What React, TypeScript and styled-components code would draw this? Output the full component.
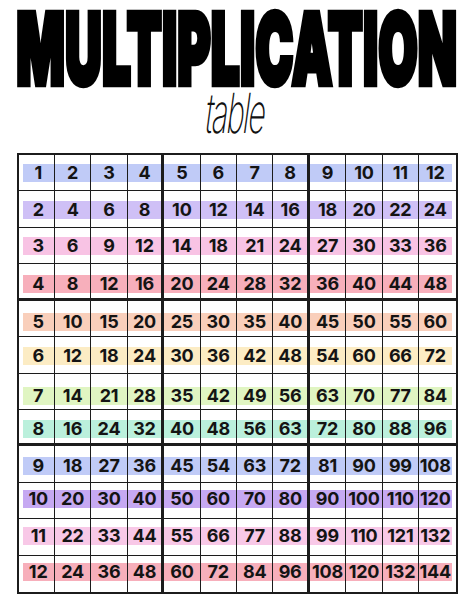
import React, { useLayoutEffect, useRef, useState } from 'react';
import styled, { createGlobalStyle } from 'styled-components';

const GlobalStyle = createGlobalStyle`
  html, body {
    margin: 0;
    padding: 0;
    background: #ffffff;
  }
  body {
    overflow: hidden;
  }
`;

const Page = styled.div`
  width: 474px;
  height: 612px;
  padding-top: 11px;
  box-sizing: border-box;
  display: flex;
  flex-direction: column;
  align-items: center;
  background: #ffffff;
  font-family: Inter, 'Noto Sans', sans-serif;
`;

const TitleBox = styled.div`
  width: 452px;
  height: 78px;
  display: flex;
  justify-content: center;
`;

const Title = styled.h1`
  margin: -2px 0 0 0;
  padding: 0 3px;
  white-space: nowrap;
  font-family: Inter, 'Noto Sans', sans-serif;
  font-weight: 900;
  font-size: 44px;
  line-height: 0.85em;
  letter-spacing: 0.6px;
  color: #000;
  -webkit-text-stroke: 3.4px #000;
  transform-origin: center top;
`;

const ScriptBox = styled.div`
  height: 64px;
  display: flex;
  align-items: flex-start;
  justify-content: center;
`;

const Script = styled.div`
  font-family: Inter, 'DejaVu Sans', sans-serif;
  font-weight: 200;
  font-size: 30px;
  line-height: 30px;
  letter-spacing: -1.5px;
  color: #111;
  transform: scaleY(1.85) skewX(-14deg);
  transform-origin: center top;
  margin: -4px 0 0 4px;
`;

const Grid = styled.div`
  width: 441px;
  height: 441px;
  box-sizing: border-box;
  border: 2px solid #1c1c1c;
  display: grid;
  grid-template-columns: repeat(12, 1fr);
  grid-template-rows: repeat(12, 1fr);
`;

const Cell = styled.div<{ $col: number; $row: number }>`
  box-sizing: border-box;
  min-width: 0;
  border-right: ${p => (p.$col === 12 ? 0 : p.$col % 4 === 0 ? 3 : 1.7)}px solid #1c1c1c;
  border-bottom: ${p => (p.$row === 12 ? 0 : p.$row % 4 === 0 ? 3 : 1.7)}px solid #1c1c1c;
  display: flex;
  flex-direction: column;
`;

const Band = styled.div<{ $color: string; $top: number; $col: number }>`
  margin-top: ${p => p.$top}px;
  margin-left: ${p => (p.$col === 1 ? 4 : 0)}px;
  margin-right: ${p => (p.$col === 12 ? 4 : 0)}px;
  height: 18px;
  line-height: 18px;
  background: ${p => p.$color};
  text-align: center;
  font-family: Inter, 'Noto Sans', sans-serif;
  font-weight: 700;
  font-size: 18px;
  letter-spacing: -0.2px;
  color: #141414;
  white-space: nowrap;
`;

// values as printed on the sheet (two cells differ from the true product)
const table = [
  [1, 2, 3, 4, 5, 6, 7, 8, 9, 10, 11, 12],
  [2, 4, 6, 8, 10, 12, 14, 16, 18, 20, 22, 24],
  [3, 6, 9, 12, 14, 18, 21, 24, 27, 30, 33, 36],
  [4, 8, 12, 16, 20, 24, 28, 32, 36, 40, 44, 48],
  [5, 10, 15, 20, 25, 30, 35, 40, 45, 50, 55, 60],
  [6, 12, 18, 24, 30, 36, 42, 48, 54, 60, 66, 72],
  [7, 14, 21, 28, 35, 42, 49, 56, 63, 70, 77, 84],
  [8, 16, 24, 32, 40, 48, 56, 63, 72, 80, 88, 96],
  [9, 18, 27, 36, 45, 54, 63, 72, 81, 90, 99, 108],
  [10, 20, 30, 40, 50, 60, 70, 80, 90, 100, 110, 120],
  [11, 22, 33, 44, 55, 66, 77, 88, 99, 110, 121, 132],
  [12, 24, 36, 48, 60, 72, 84, 96, 108, 120, 132, 144],
];

const rows = [
  { color: '#c0cbf7', top: 9 },
  { color: '#cfc0f6', top: 9.5 },
  { color: '#f8c3e4', top: 9 },
  { color: '#f7afbb', top: 11 },
  { color: '#f9cfbb', top: 12 },
  { color: '#fcecc4', top: 10 },
  { color: '#e0f5c2', top: 13 },
  { color: '#bbf0dc', top: 10.5 },
  { color: '#c0cbf7', top: 11 },
  { color: '#c6a9f2', top: 7 },
  { color: '#f8c8e7', top: 8 },
  { color: '#f7afbb', top: 7 },
];

function BigTitle() {
  const ref = useRef<HTMLHeadingElement>(null);
  const [fit, setFit] = useState({ size: 44, sy: 2.2 });

  // size the font so the word spans the sheet, then stretch it tall
  useLayoutEffect(() => {
    if (ref.current) {
      const w = ref.current.offsetWidth - 6;
      const size = (44 * 442) / w;
      setFit({ size, sy: 77 / (size * 0.727 + 3.4) });
    }
  }, []);

  return (
    <TitleBox>
      <Title ref={ref} style={{ fontSize: fit.size, transform: `scaleY(${fit.sy})` }}>
        MULTIPLICATION
      </Title>
    </TitleBox>
  );
}

export default function App() {
  return (
    <>
      <GlobalStyle />
      <Page>
        <BigTitle />
        <ScriptBox>
          <Script>table</Script>
        </ScriptBox>
        <Grid>
          {table.map((line, i) =>
            line.map((v, j) => (
              <Cell key={`${i}-${j}`} $row={i + 1} $col={j + 1}>
                <Band $color={rows[i].color} $top={rows[i].top} $col={j + 1}>
                  {v}
                </Band>
              </Cell>
            ))
          )}
        </Grid>
      </Page>
    </>
  );
}
